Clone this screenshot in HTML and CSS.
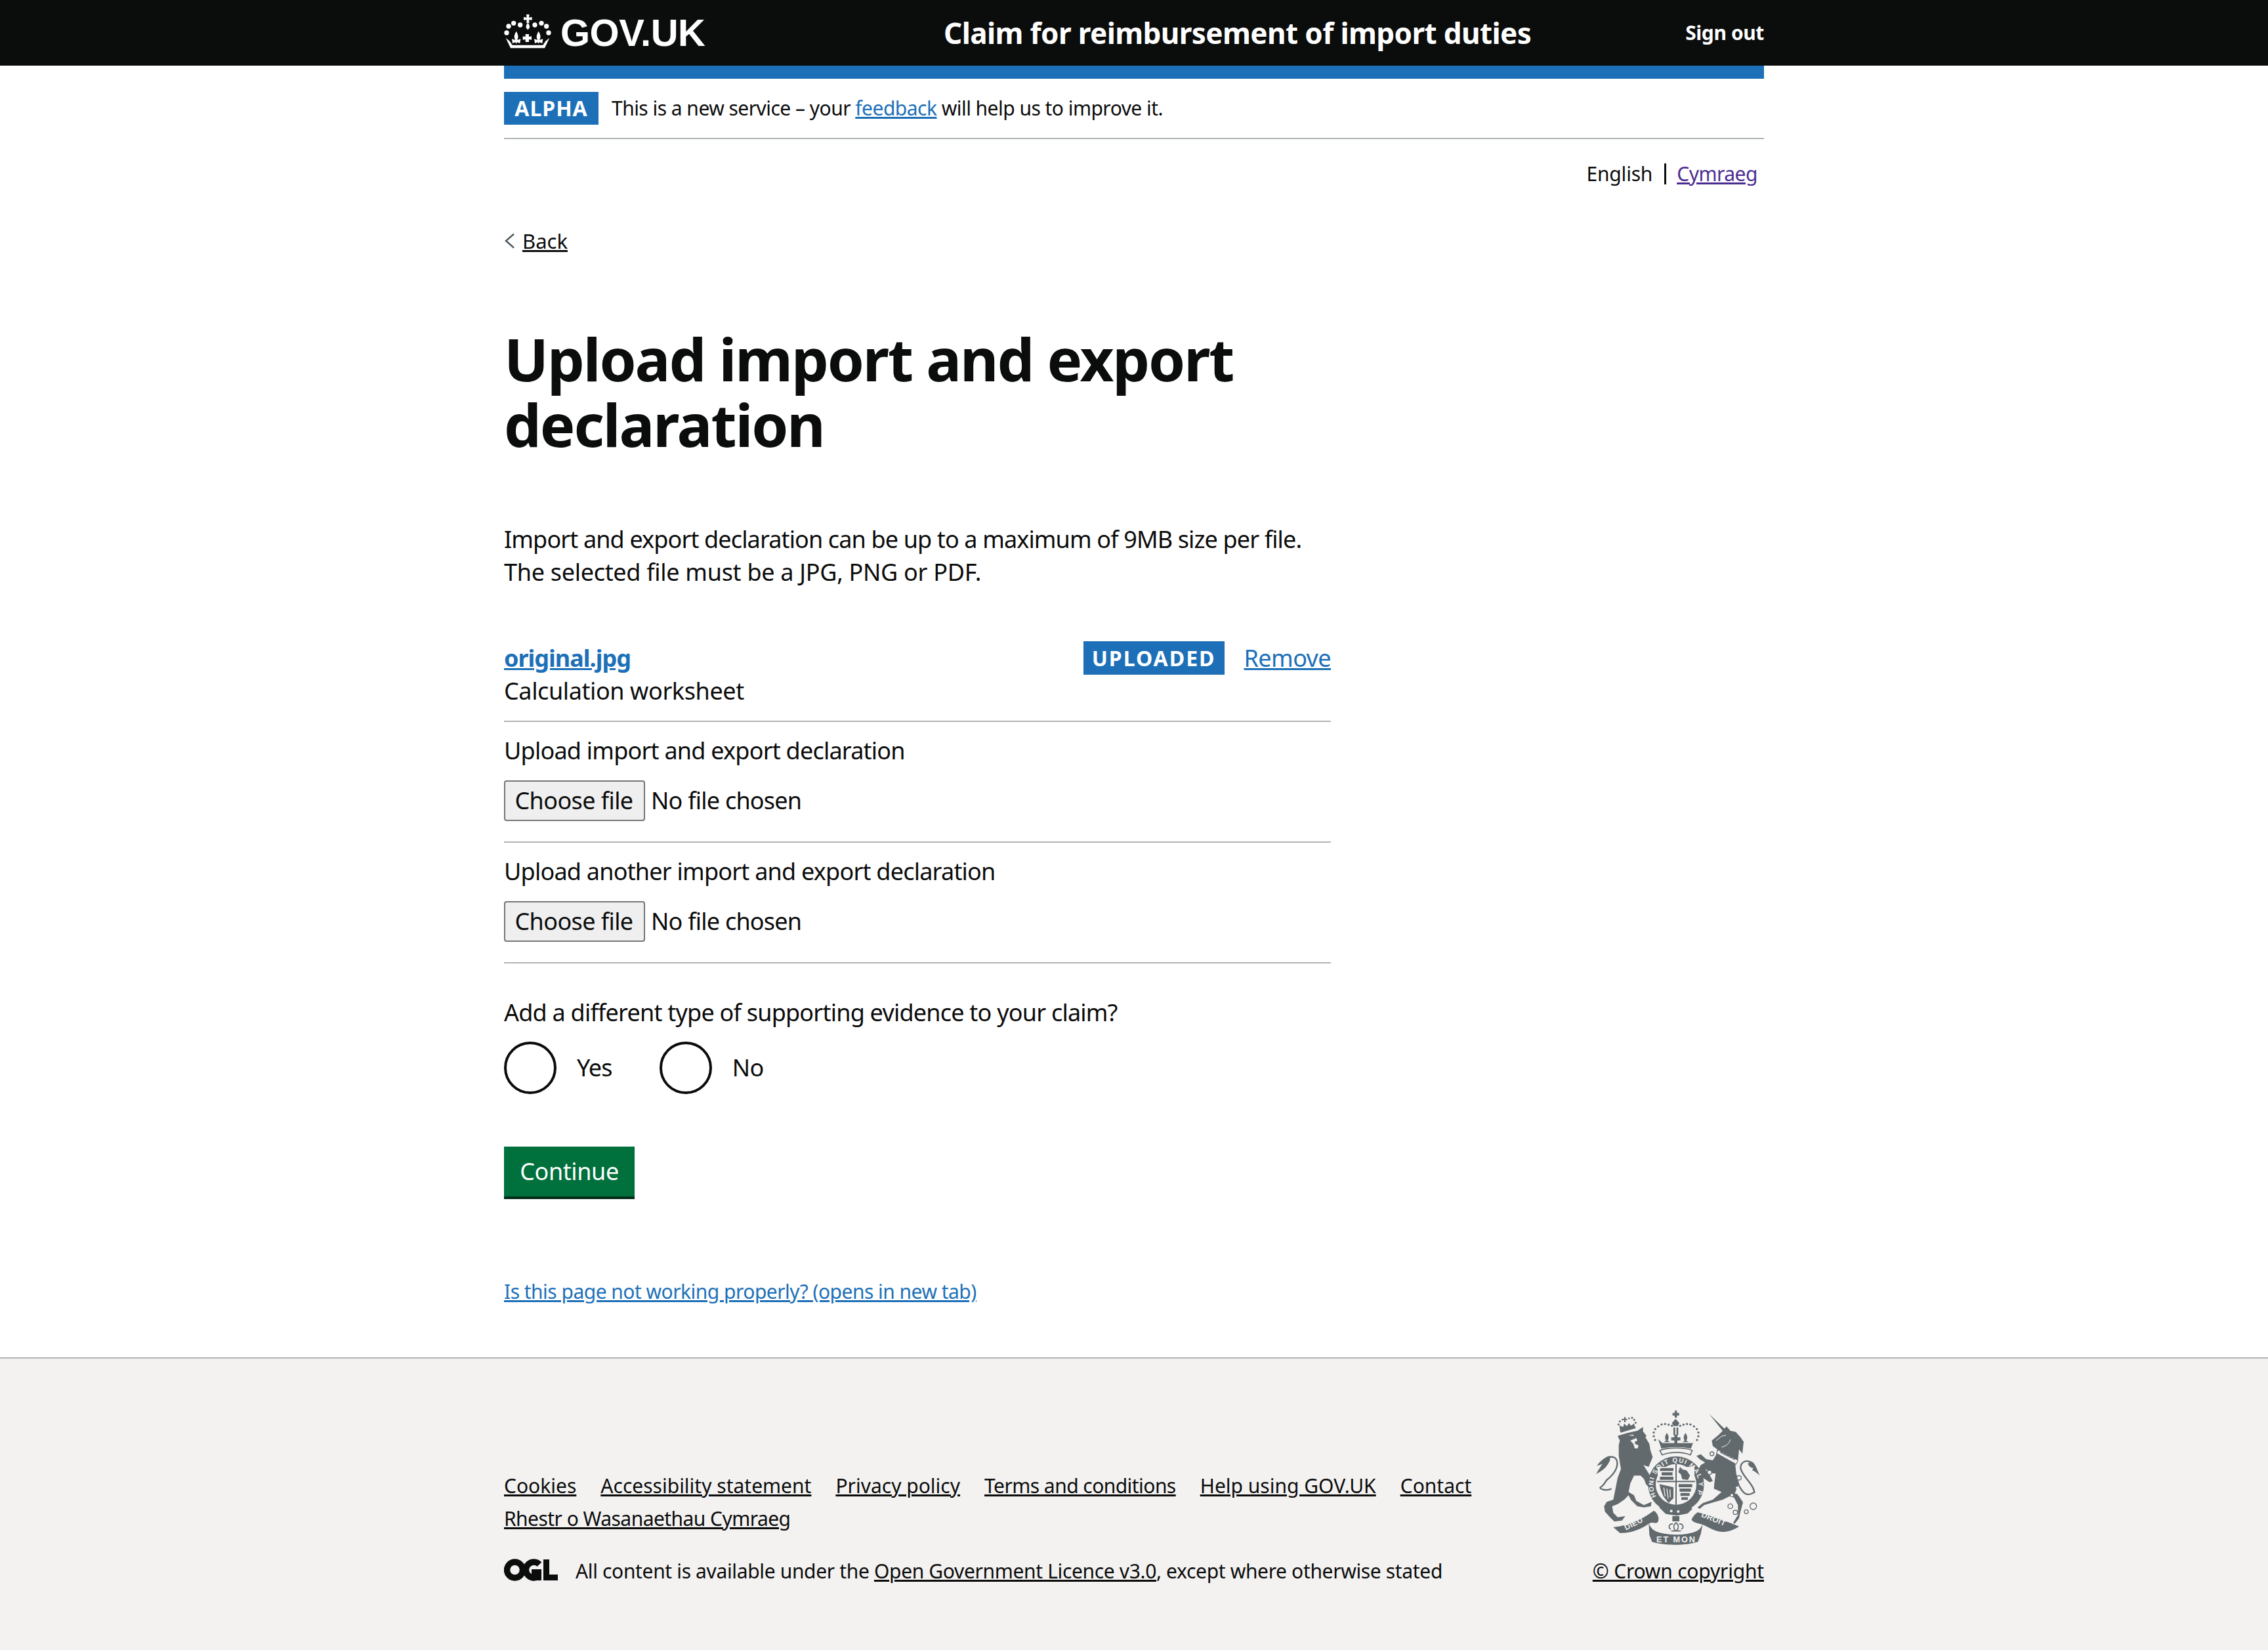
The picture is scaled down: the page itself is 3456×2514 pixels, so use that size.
FILE: index.html
```html
<!DOCTYPE html>
<html lang="en">
<head>
<meta charset="utf-8">
<title>Upload import and export declaration</title>
<link rel="stylesheet" href="styles.css">
</head>
<body>
<header class="top">
  <div class="top-inner">
    <a class="logo">
      <svg class="crown" viewBox="24 18 216 156" aria-hidden="true">
        <g fill="#fff">
          <circle cx="45" cy="72" r="11"/><circle cx="68" cy="58" r="11"/><circle cx="98" cy="66" r="11"/><circle cx="165" cy="66" r="11"/><circle cx="195" cy="58" r="11"/><circle cx="218" cy="72" r="11"/>
          <circle cx="36" cy="102" r="11"/><circle cx="228" cy="102" r="11"/>
          <path d="M126 18h14l-2 14 14-2v14l-14-2 2 14h-14l2-14-14 2V30l14 2z"/>
          <path d="M133 55c9 15 13 23 0 33-13-10-9-18 0-33z"/>
          <path d="M80 95c12 20 10 30 4 40l16-5-3 20-13-5-4 7-4-7-13 5-3-20 16 5c-6-10-8-20 4-40z"/>
          <path d="M182 95c12 20 10 30 4 40l16-5-3 20-13-5-4 7-4-7-13 5-3-20 16 5c-6-10-8-20 4-40z"/>
          <path d="M122 108h16v12l12-2v16l-12-2v12h-16v-12l-12 2v-16l12 2z"/>
          <path d="M32 125l18 15 12 18h140l12-18 18-15-22 47H54z"/>
        </g>
      </svg>
      <span class="logo-text">GOV.UK</span>
    </a>
    <a class="service">Claim for reimbursement of import duties</a>
    <a class="signout">Sign out</a>
  </div>
</header>

<div class="wrap">
  <div class="bluebar"></div>
  <div class="phase">
    <strong class="phase-tag">ALPHA</strong>
    <span class="phase-text">This is a new service – your <a class="link" href="#">feedback</a> will help us to improve it.</span>
  </div>
  <div class="lang"><span>English</span><span class="lang-sep"></span><a class="visited" href="#">Cymraeg</a></div>
  <a class="back" href="#"><svg class="chev" viewBox="0 0 16 24" aria-hidden="true"><path d="M15 1.500 3 12l12 10.500" fill="none" stroke="#505a5f" stroke-width="2.500"/></svg><span>Back</span></a>

  <main class="main">
    <h1 class="title">Upload import and export declaration</h1>
    <p class="lead">Import and export declaration can be up to a maximum of 9MB size per file.<br><span class="lead-second">The selected file must be a JPG, PNG or PDF.</span></p>

    <div class="uploaded-head">
      <a class="file-name" href="#">original.jpg</a>
      <strong class="uploaded-tag">UPLOADED</strong>
      <a class="link remove" href="#">Remove</a>
    </div>
    <div class="file-kind">Calculation worksheet</div>

    <div class="upload-row">
      <label class="row-label">Upload import and export declaration</label>
      <div class="picker"><button class="choose" type="button">Choose file</button><span>No file chosen</span></div>
    </div>
    <div class="upload-row">
      <label class="row-label">Upload another import and export declaration</label>
      <div class="picker"><button class="choose" type="button">Choose file</button><span>No file chosen</span></div>
    </div>

    <div class="question">Add a different type of supporting evidence to your claim?</div>
    <div class="radios">
      <label class="radio radio-yes"><input type="radio" name="more"><span>Yes</span></label>
      <label class="radio"><input type="radio" name="more"><span>No</span></label>
    </div>
    <button class="continue" type="button">Continue</button>
    <a class="report link" href="#">Is this page not working properly? (opens in new tab)</a>
  </main>
</div>

<footer class="foot">
  <div class="foot-inner">
    <div class="foot-left">
      <ul class="foot-links">
        <li><a href="#">Cookies</a></li>
        <li><a href="#">Accessibility statement</a></li>
        <li><a href="#">Privacy policy</a></li>
        <li><a class="tight" href="#">Terms and conditions</a></li>
        <li><a href="#">Help using GOV.UK</a></li>
        <li><a href="#">Contact</a></li>
        <li class="foot-break"><a class="tight" href="#">Rhestr o Wasanaethau Cymraeg</a></li>
      </ul>
      <div class="licence">
        <svg class="ogl" viewBox="0 0 82 34" aria-hidden="true">
          <circle cx="16.500" cy="17" r="12" fill="none" stroke="#0b0c0c" stroke-width="9.500"/>
          <path d="M54 8.500A12 12 0 1 0 52 27" fill="none" stroke="#0b0c0c" stroke-width="9.500"/>
          <path d="M42 16h15v17h-7l-1-3-7-2zM60 1h9v23h13v9H60z" fill="#0b0c0c"/>
        </svg>
        <span class="licence-text">All content is available under the <a href="#">Open Government Licence v3.0</a>, except where otherwise stated</span>
      </div>
    </div>
    <div class="foot-right">
      <svg class="crest" viewBox="0 0 780 630" role="img" aria-label="Royal coat of arms">
        <!-- left half: lion -->
        <g fill="#626a6e">
          <path d="M120 128l45-13 45-10 26-17v20l16 20-5 7 18 30 5 30 10 30-18 45-24-8 24 38 26 45 8 20-24 7-22-22-10-25-15-15h-30l-17 35-8 40 25 15 10 25 35 20 35-15-3 20-32 5-30-5-30-30-10-20-20 20-30 20-25 10 5 30 20 20 35-5-15 20-35 5-20-20-23-25-4-25 12-20 30-10 8-40 12-60 15-40-10-60v-50l5-20z"/>
          <path d="M92 370c-17 10-47 5-52-5 20-15 15-15 30-35 25-20 50-45 48-80-3-25-23-30-40-22" fill="none" stroke="#626a6e" stroke-width="7"/>
          <path d="M85 220c-25 5-45 25-60 45 15-3 20-7 25-9-10 19-20 29-28 47 23-13 48-28 63-63z"/>
          <path d="M132 110l-4-30 17 8 5-16 12 12 10-14 8 12 16-10 2 16z"/>
          <path d="M150 42h6v8h8v6h-8v10h-6V56h-8v-6h8z"/>
          <path d="M130 105l70-20 3 8-68 20z"/>
          <circle cx="124" cy="76" r="4.500"/><circle cx="130" cy="62" r="4.500"/><circle cx="142" cy="54" r="4"/><circle cx="172" cy="48" r="4"/><circle cx="186" cy="46" r="4.500"/><circle cx="196" cy="55" r="4.500"/><circle cx="202" cy="68" r="4.500"/>
          <path d="M100 545c70-5 140-40 185-75 20 10 30 45 15 55-10 5-20-5-35 3-45 32-95 47-135 44z"/>
        </g>
        <path d="M178 150l27-12 5 12-12 5 2 10 15 7-3 13h-14l-6-20zM168 126l22-4 5 6z" fill="#f3f2f1"/>

        <!-- centre: royal arms -->
        <g transform="translate(-135 -75)">
          <g fill="#626a6e">
            <path d="M516 88h10v10h10v12h-10v10h-10v-10h-10V98h10zM503 145l17-20 17 20-7 13h-20zM510 165h8v35h-8zM524 165h8v35h-8z"/>
            <path d="M514 198h14v12h14v14h-14v14h-14v-14h-14v-14h14z"/>
            <path d="M480 190c10 15 10 25 4 35l11 7h-30l11-7c-6-10-6-20 4-35zM565 190c10 15 10 25 4 35l11 7h-30l11-7c-6-10-6-20 4-35z"/>
            <path d="M440 218l20 18 140 0 6-18-16 44c-40-10-100-10-135 0z"/>
            <circle cx="420" cy="205" r="5"/><circle cx="420" cy="188" r="5"/><circle cx="427" cy="172" r="5"/><circle cx="440" cy="160" r="5"/><circle cx="456" cy="151" r="5"/><circle cx="472" cy="149" r="5"/><circle cx="488" cy="152" r="5"/><circle cx="503" cy="157" r="5"/>
            <circle cx="624" cy="205" r="5"/><circle cx="624" cy="188" r="5"/><circle cx="617" cy="172" r="5"/><circle cx="604" cy="160" r="5"/><circle cx="588" cy="151" r="5"/><circle cx="572" cy="149" r="5"/><circle cx="556" cy="152" r="5"/><circle cx="541" cy="157" r="5"/>
            <circle cx="426" cy="222" r="5"/><circle cx="618" cy="222" r="5"/>
            <circle cx="522" cy="425" r="128"/>
            <path d="M445 530l30 30 50 8 50-10 22-22-20-12-50 14-50-6-20-12z"/>
            <path d="M505 570h32v24h-32z"/>
          </g>
          <path d="M448 270c32-15 117-15 148 0l-8 20c-43-15-88-15-130 0z" fill="#f3f2f1" stroke="#626a6e" stroke-width="5"/>
          <circle cx="500" cy="547" r="6" fill="#f3f2f1"/><circle cx="532" cy="549" r="6" fill="#f3f2f1"/>
          <circle cx="522" cy="425" r="93" fill="#f3f2f1"/>
          <path d="M438 345h168v65c0 50-40 90-84 110-44-20-84-60-84-110z" fill="#f3f2f1"/>
          <path d="M442 345h160M442 345v65c0 50-40 85-80 108M602 345v65c0 50-40 85-80 108" fill="none"/>
          <path d="M522 330v190M435 412h174" stroke="#626a6e" stroke-width="6" fill="none"/>
          <g fill="#626a6e">
            <path d="M448 350h62v14h-62zM456 370h50v14h-50zM448 390h62v14h-62z"/>
            <path d="M540 345l12 12 18 4 16 24-10 20-26-4-6-22-12-10z"/>
            <path d="M534 424h62v14h-62zM538 444h52v14h-52zM542 464h42v14h-42zM546 484h30v12h-30z"/>
            <path d="M446 424l64 14 0 50-22 22-24-30-12-30z"/>
          </g>
          <path d="M466 440l6 40M480 444l6 46M494 448l2 36" stroke="#f3f2f1" stroke-width="4" fill="none"/>
          <g fill="#f3f2f1" font-family="Liberation Sans, Arial, sans-serif" font-weight="700">
            <path id="garter" d="M432 480A104 104 0 1 1 612 480" fill="none"/>
            <text font-size="30"><textPath href="#garter" textLength="520">HONI SOIT QUI MAL Y PENSE</textPath></text>
          </g>
          <g fill="#626a6e">
            <path d="M397 600c5 18 15 30 30 38 50 22 140 22 190 0 15-8 23-20 28-38l-10 52-13 36c-60 18-150 18-210 0l-12-32z"/>
          </g>
          <path d="M522 600c18 14 8 30 4 36h-8c-4-6-14-22 4-36zM508 606c-18-2-24 16-10 24M536 606c18-2 24 16 10 24M500 638h44" fill="#f3f2f1" stroke="#626a6e" stroke-width="5"/>
          <text class="crest-text" x="432" y="690" font-size="38" textLength="178">ET MON</text>
        </g>
        <text class="crest-text" font-size="36" transform="translate(158 560) rotate(-27)">DIEU</text>

        <!-- right half: unicorn -->
        <g transform="translate(390 0)">
          <g fill="#626a6e">
            <path d="M148 28l70 67 10-10 17 20 25 5 22 25 14 20-6 55-15-20-5 50-12 22 4 38 13 45-17 40 17 20 18 27-13 48-5 25-20 25-7-5 22-35v-45l-18-35-22-5-30 15-35 10-50 15-20 17-10-7 25-20 45-15 40-35-35-15 2-25 6-45h-13l-35-20 20 25 15 30-15 5-30-20-20-40 10-18 20-12-25-15-15-15 20-8 25 23 30 5 15-25 5-25-20-15-5-25 30-25 20-20z"/>
            <path d="M280 345c20 45 40 65 75 40" fill="none" stroke="#626a6e" stroke-width="7"/>
            <path d="M355 390c0-40-60-80-63-115 0-30 28-40 53-23" fill="none" stroke="#626a6e" stroke-width="7"/>
            <path d="M340 245c20 5 25 35 40 65-15-15-25-20-35-25l5-10c-10 0-20-7-25-20z"/>
            <path d="M95 478c55 12 135 42 190 64-25 18-65 30-95 23-35-10-60-30-85-35-20-5-35-10-37-20 7-15 17-25 27-32z"/>
            <path d="M190 190l8-10 4 8 8-6 4 10 10-6 4 10 10-4 4 10 10-4 4 12 14-4 10 14z"/>
          </g>
          <path d="M188 192l92 48-8 18-90-50z" fill="#f3f2f1" stroke="#626a6e" stroke-width="3"/>
          <path d="M198 205l8-12 6 18 8-12 6 18 10-10 4 18 10-8 4 16 8-6 4 12z" fill="#626a6e"/>
          <path d="M180 150l25-20 20-5M245 145c-5 20-20 30-40 35" fill="none" stroke="#f3f2f1" stroke-width="3"/>
          <g fill="#f3f2f1">
            <circle cx="275" cy="365" r="5"/><circle cx="252" cy="400" r="6"/><circle cx="270" cy="390" r="4"/><circle cx="225" cy="420" r="3"/>
          </g>
          <g fill="none" stroke="#626a6e" stroke-width="4">
            <circle cx="161" cy="210" r="9"/><circle cx="150" cy="295" r="10" fill="#f3f2f1"/><circle cx="245" cy="450" r="11"/><circle cx="268" cy="478" r="10"/><circle cx="318" cy="475" r="9"/><circle cx="350" cy="450" r="15"/>
          </g>
          <circle cx="285" cy="320" r="10" fill="#f3f2f1" stroke="#626a6e" stroke-width="4"/>
          <text class="crest-text" font-size="36" transform="translate(110 497) rotate(22)">DROIT</text>
        </g>
      </svg>
      <a class="crown-link" href="#">© Crown copyright</a>
    </div>
  </div>
</footer>
</body>
</html>
```

FILE: styles.css
```css
* { box-sizing: border-box; }
html, body { margin: 0; padding: 0; }
body {
  font-family: "Noto Sans", "Open Sans", sans-serif;
  font-size: 36px;
  line-height: 50px;
  letter-spacing: -0.78px;
  color: #0b0c0c;
  background: #fff;
  height: 2514px;
  display: flex;
  flex-direction: column;
}
a { color: inherit; }
.link { color: #1d70b8; text-decoration: underline; }

.top { height: 100px; background: #0b0c0c; color: #fff; }
.top-inner { width: 1920px; margin: 0 auto; height: 100px; display: flex; align-items: center; }
.logo { display: flex; align-items: center; width: 670px; }
.crown { width: 72px; height: 52px; margin-right: 14px; margin-top: -4px; }
.logo-text { font: 700 58px/1 "Liberation Sans", Arial, sans-serif; letter-spacing: -0.5px; }
.service { font-weight: 700; font-size: 44px; letter-spacing: -0.6px; flex: 1; white-space: nowrap; }
.signout { font-weight: 700; font-size: 30px; letter-spacing: -0.4px; }

.wrap { width: 1920px; margin: 0 auto; }
.bluebar { height: 20px; background: #1d70b8; }
.phase { display: flex; align-items: center; padding: 20px 0; border-bottom: 2px solid #b1b4b6; height: 92px; font-size: 30px; line-height: 40px; letter-spacing: -0.53px; }
.phase-tag { width: 144px; height: 50px; background: #1d70b8; color: #fff; font-size: 32px; line-height: 50px; text-align: center; letter-spacing: 1px; margin-right: 20px; }
.lang { display: flex; justify-content: flex-end; align-items: center; margin-top: 33px; padding-right: 10px; font-size: 30px; line-height: 40px; height: 40px; letter-spacing: -0.2px; }
.lang-sep { width: 3px; height: 32px; background: #0b0c0c; margin: 0 16px 0 18px; }
.visited { color: #4c2c92; text-decoration: underline; letter-spacing: -0.5px; }
.back { display: flex; align-items: center; margin-top: 62px; height: 40px; font-size: 31px; line-height: 40px; letter-spacing: 0; text-decoration: underline; width: max-content; }
.chev { width: 16px; height: 24px; margin-right: 12px; }

.main { width: 1260px; }
.title { margin: 109px 0 0; width: 1200px; font-size: 90px; line-height: 100px; font-weight: 700; letter-spacing: -2.1px; }
.lead { margin: 101px 0 0; white-space: nowrap; letter-spacing: -0.87px; }
.lead-second { letter-spacing: -0.3px; }

.uploaded-head { display: flex; align-items: center; margin-top: 80px; height: 51px; }
.file-name { color: #1d70b8; font-weight: 700; letter-spacing: -1px; text-decoration: underline; margin-right: auto; }
.uploaded-tag { width: 215px; height: 51px; background: #1d70b8; color: #fff; font-size: 32px; line-height: 51px; text-align: center; letter-spacing: 2px; }
.remove { margin-left: 30px; letter-spacing: -0.6px; }
.file-kind { height: 70px; padding-bottom: 20px; letter-spacing: -0.4px; }
.upload-row { border-top: 2px solid #b1b4b6; padding: 19px 0 31px; }
.row-label { display: block; margin-bottom: 20px; }
.picker { display: flex; align-items: center; height: 62px; gap: 9px; }
.choose { width: 215px; height: 62px; padding: 0 2px 0 0; background: #efefef; border: 2px solid #767676; border-radius: 4px; font-family: inherit; font-size: 36px; letter-spacing: -0.6px; line-height: 50px; color: #0b0c0c; }
.question { border-top: 2px solid #b1b4b6; padding-top: 50px; }
.radios { display: flex; margin-top: 19px; height: 80px; }
.radio { display: flex; align-items: center; margin-right: 72px; }
.radio input { appearance: none; width: 80px; height: 80px; margin: 0 31px 0 0; border: 4px solid #0b0c0c; border-radius: 50%; background: #fff; }
.continue { display: block; margin-top: 80px; width: 199px; height: 80px; border: 0; box-shadow: inset 0 -4px 0 #002d18; background: #00703c; color: #fff; font-family: inherit; font-size: 36px; letter-spacing: -0.4px; line-height: 50px; padding: 0 0 4px; }
.report { display: block; margin-top: 121px; font-size: 30px; line-height: 40px; letter-spacing: -0.52px; white-space: nowrap; }

.foot { flex: 1; margin-top: 80px; background: #f3f2f1; border-top: 2px solid #b1b4b6; font-size: 30px; line-height: 50px; letter-spacing: 0; }
.foot-inner { width: 1920px; margin: 0 auto; padding-top: 75px; display: flex; justify-content: space-between; align-items: flex-end; }
.foot-left { width: 1560px; }
.foot-links { list-style: none; margin: 0; padding: 0; display: flex; flex-wrap: wrap; column-gap: 37px; width: 1560px; }
.foot-break { flex-basis: 100%; }
.tight { letter-spacing: -0.55px; }
.licence { display: flex; align-items: center; margin-top: 30px; }
.licence-text { letter-spacing: -0.35px; }
.ogl { width: 82px; height: 34px; margin-right: 27px; margin-top: -4px; }
.foot-right { display: flex; flex-direction: column; align-items: flex-end; }
.crest { width: 260px; height: 210px; margin-right: 3px; margin-bottom: 14px; }
.crest-text { fill: #f3f2f1; font-family: "Liberation Sans", Arial, sans-serif; font-weight: 700; letter-spacing: 1px; }
.crown-link { letter-spacing: -0.2px; }
```
